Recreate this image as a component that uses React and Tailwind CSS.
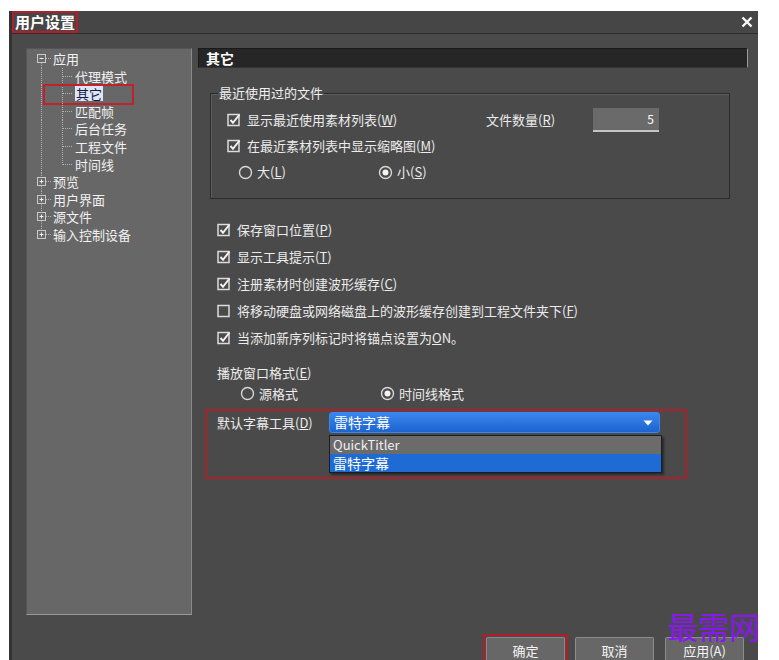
import React from "react";

const FONT = { fontFamily: '"Noto Sans CJK SC", "Noto Sans", sans-serif' };

const CheckBox = ({ checked }) => (
  <svg width="14" height="14" viewBox="0 0 14 14" className="shrink-0">
    <rect x="1" y="1.5" width="11" height="11" fill="none" stroke="#dcdcdc" strokeWidth="1.5" />
    {checked && <path d="M3.5 7 L6 9.8 L12.5 1.5" fill="none" stroke="#f2f2f2" strokeWidth="2" />}
  </svg>
);

const Radio = ({ checked }) => (
  <svg width="15" height="15" viewBox="0 0 15 15" className="shrink-0">
    <circle cx="7.5" cy="7.5" r="6" fill="none" stroke="#d8d8d8" strokeWidth="1.4" />
    {checked && <circle cx="7.5" cy="7.5" r="3" fill="#f4f4f4" />}
  </svg>
);

// tree connectors: x=14 top-level trunk, x=35 child trunk
const TopRow = ({ label, open, first, last }) => (
  <div className="flex h-[17.6px] items-center">
    <svg width="26" height="17.6" viewBox="0 0 26 17.6" className="shrink-0">
      {!first && <line x1="14.5" y1="0" x2="14.5" y2="8.8" stroke="#b5b5b5" strokeDasharray="1 1" />}
      {!last && <line x1="14.5" y1="8.8" x2="14.5" y2="17.6" stroke="#b5b5b5" strokeDasharray="1 1" />}
      <line x1="19" y1="8.5" x2="25" y2="8.5" stroke="#b5b5b5" strokeDasharray="1 1" />
      <rect x="10.5" y="4.5" width="8" height="8" fill="#6a6a6a" stroke="#c8c8c8" />
      <line x1="12.5" y1="8.5" x2="16.5" y2="8.5" stroke="#f0f0f0" />
      {!open && <line x1="14.5" y1="6.5" x2="14.5" y2="10.5" stroke="#f0f0f0" />}
    </svg>
    <span className="text-[13px] text-[#f2f2f2]">{label}</span>
  </div>
);

const ChildRow = ({ label, last, selected }) => (
  <div className="relative flex h-[17.6px] items-center">
    <svg width="48" height="17.6" viewBox="0 0 48 17.6" className="shrink-0">
      <line x1="14.5" y1="0" x2="14.5" y2="17.6" stroke="#b5b5b5" strokeDasharray="1 1" />
      <line x1="35.5" y1="0" x2="35.5" y2={last ? 8.8 : 17.6} stroke="#b5b5b5" strokeDasharray="1 1" />
      <line x1="36" y1="8.5" x2="46" y2="8.5" stroke="#b5b5b5" strokeDasharray="1 1" />
    </svg>
    {selected ? (
      <span className="bg-[#dfe5f3] px-[1px] text-[13px] leading-[15px] text-[#141a4a]">{label}</span>
    ) : (
      <span className="text-[13px] text-[#f2f2f2]">{label}</span>
    )}
    {selected && (
      <div className="absolute left-[16px] top-[-1px] h-[21px] w-[91px] border-2 border-[#c0212b]" />
    )}
  </div>
);

const Btn = ({ children }) => (
  <div className="flex h-[26px] w-[79px] items-start justify-center rounded-t-[2px] border border-b-0 border-[#8c8c8c] bg-[#676767] pt-[3px] text-[13px] text-[#f4f4f4]">
    {children}
  </div>
);

export default function App() {
  return (
    <div className="relative h-[660px] w-[779px] overflow-hidden bg-white pl-[9px] pt-[11px]" style={FONT}>
      <div className="flex h-[660px] w-[749px] flex-col border-l-[3px] border-[#333] bg-[#4a4a4a]">
        {/* title bar */}
        <div className="flex h-[23px] shrink-0 items-center justify-between border-b border-[#2d2d2d] bg-[#464646] pr-[5px]">
          <div className="flex h-[22px] items-center border-2 border-[#b31e2a] px-[1px] text-[15px] font-bold text-white">
            用户设置
          </div>
          <svg width="12" height="12" viewBox="0 0 12 12">
            <path d="M1.5 1.5 L10.5 10.5 M10.5 1.5 L1.5 10.5" stroke="#fafafa" strokeWidth="2.4" />
          </svg>
        </div>

        {/* body */}
        <div className="flex h-[581px] shrink-0 pl-[14px] pt-[14px]">
          {/* tree */}
          <div className="h-[567px] w-[166px] shrink-0 border border-b-[#9a9a9a] border-l-[#555] border-r-[#8a8a8a] border-t-[#555] bg-[#676767] pt-[1px]">
            <TopRow label="应用" open first />
            <ChildRow label="代理模式" />
            <ChildRow label="其它" selected />
            <ChildRow label="匹配帧" />
            <ChildRow label="后台任务" />
            <ChildRow label="工程文件" />
            <ChildRow label="时间线" last />
            <TopRow label="预览" />
            <TopRow label="用户界面" />
            <TopRow label="源文件" />
            <TopRow label="输入控制设备" last />
          </div>

          {/* content */}
          <div className="ml-[6px] w-[550px] shrink-0 text-[13px] text-[#ececec]">
            <div className="flex h-[20px] items-center border border-r-[#9a9a9a] border-t-[#1a1a1a] border-l-[#1a1a1a] border-b-[#333] bg-[#262626] pl-[7px] text-[14px] font-bold text-white">
              其它
            </div>

            <fieldset className="ml-[12px] mt-[16px] w-[520px] border border-[#2b2b2b] p-0 shadow-[inset_1px_1px_0_#5e5e5e]">
              <legend className="ml-[7px] px-[1px] text-[13px] leading-[18px] text-[#f0f0f0]">最近使用过的文件</legend>
              <div className="px-[16px] pb-[13px] pt-[5px]">
                <div className="flex h-[26px] items-center">
                  <div className="flex w-[259px] items-center gap-[6px]">
                    <CheckBox checked />
                    <span>显示最近使用素材列表(<u>W</u>)</span>
                  </div>
                  <span className="w-[107px]">文件数量(<u>R</u>)</span>
                  <div className="flex h-[24px] w-[66px] items-center justify-end border-b-2 border-[#c4c4c4] bg-[#6a6a6a] pr-[5px] text-[12px] text-white">
                    5
                  </div>
                </div>
                <div className="flex h-[26px] items-center gap-[6px]">
                  <CheckBox checked />
                  <span>在最近素材列表中显示缩略图(<u>M</u>)</span>
                </div>
                <div className="flex h-[26px] items-center pl-[11px]">
                  <div className="flex w-[140px] items-center gap-[4px]">
                    <Radio />
                    <span>大(<u>L</u>)</span>
                  </div>
                  <div className="flex items-center gap-[4px]">
                    <Radio checked />
                    <span>小(<u>S</u>)</span>
                  </div>
                </div>
              </div>
            </fieldset>

            <div className="mt-[17px] pl-[19px]">
              {[
                [true, <>保存窗口位置(<u>P</u>)</>],
                [true, <>显示工具提示(<u>T</u>)</>],
                [true, <>注册素材时创建波形缓存(<u>C</u>)</>],
                [false, <>将移动硬盘或网络磁盘上的波形缓存创建到工程文件夹下(<u>F</u>)</>],
                [true, <>当添加新序列标记时将锚点设置为<u>O</u>N。</>],
              ].map(([c, t], i) => (
                <div key={i} className="flex h-[27px] items-center gap-[6px]">
                  <CheckBox checked={c} />
                  <span>{t}</span>
                </div>
              ))}

              <div className="mt-[11px] flex h-[21px] items-center">播放窗口格式(<u>E</u>)</div>
              <div className="flex h-[21px] items-center pl-[23px]">
                <div className="flex w-[140px] items-center gap-[4px]">
                  <Radio />
                  <span>源格式</span>
                </div>
                <div className="flex items-center gap-[4px]">
                  <Radio checked />
                  <span>时间线格式</span>
                </div>
              </div>
            </div>

            {/* highlighted default title tool */}
            <div className="ml-[7px] mt-[5px] h-[70px] w-[482px] border-2 border-[#a8212b] pl-[10px] pt-[1px]">
              <div className="flex items-center">
                <span className="w-[112px]">默认字幕工具(<u>D</u>)</span>
                <div className="relative">
                  <div className="flex h-[21px] w-[331px] items-center justify-between rounded-[3px] border border-[#3d86ea] bg-gradient-to-b from-[#3a85ee] to-[#1c64d0] pl-[4px] pr-[6px] text-[14px] text-white">
                    <span>雷特字幕</span>
                    <svg width="10" height="6" viewBox="0 0 10 6">
                      <path d="M0.5 0.5 L9.5 0.5 L5 5.5 Z" fill="#ffffff" />
                    </svg>
                  </div>
                  <div className="absolute left-0 top-[23px] w-[333px] border border-[#1c1c1c] shadow-[2px_2px_2px_rgba(0,0,0,0.45)]">
                    <div className="flex h-[18px] items-center bg-[#6b6b6b] pl-[3px] text-[13px] text-[#f0f0f0]">QuickTitler</div>
                    <div className="flex h-[18px] items-center bg-[#1f6bd6] pl-[3px] text-[14px] text-white">雷特字幕</div>
                  </div>
                </div>
              </div>
            </div>
          </div>
        </div>

        {/* buttons */}
        <div className="flex items-start justify-end gap-[11px] pr-[14px] pt-[19px]">
          <div className="flex gap-[7px]">
            <div className="border-2 border-[#b31e2a] p-[1px] pb-0">
              <Btn>确定</Btn>
            </div>
            <div className="pt-[3px]">
              <Btn>取消</Btn>
            </div>
          </div>
          <div className="pt-[3px]">
            <Btn>应用(A)</Btn>
          </div>
        </div>
      </div>

      {/* watermark */}
      <div className="absolute left-[667px] top-[610px] text-[31px] leading-[32px] text-[#8a16f2]">
        最需网
      </div>
    </div>
  );
}
